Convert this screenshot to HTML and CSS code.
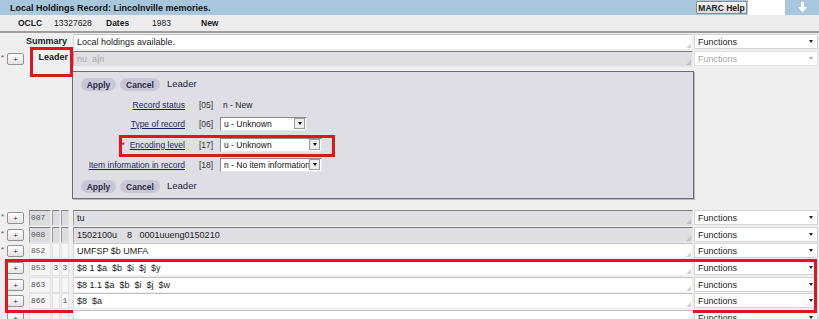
FILE: index.html
```html
<!DOCTYPE html>
<html lang="en">

<head>
    <meta charset="UTF-8">
    <meta name="viewport" content="width=device-width, initial-scale=1.0">
    <title>Local Holdings Record</title>
    <link rel="stylesheet" href="styles.css">
</head>

<body>
    <div class="titlebar">
        <span class="title">Local Holdings Record: Lincolnville memories.</span>
        <button class="help-btn" type="button">MARC Help</button>
        <span class="blank"></span>
        <span class="arrow-box">
            <svg width="9" height="11" viewBox="0 0 9 11"><path d="M3 0h3v5h3l-4.5 5.5L0 5h3z" fill="#fff"/></svg>
        </span>
    </div>

    <div class="infobar">
        <b class="w36">OCLC</b><span class="w52">13327628</span><b class="w46">Dates</b><span class="w49">1983</span><b>New</b>
    </div>

    <div class="record">
        <div class="row">
            <div class="summary-label">Summary</div>
            <div class="field">Local holdings available.</div>
            <div class="func">Functions<i class="caret"></i></div>
        </div>

        <div class="row short">
            <span class="star">*</span>
            <button class="plus" type="button">+</button>
            <div class="leader-label">Leader<span class="mark mark-leader"></span></div>
            <div class="field ro dim">nu  a|n</div>
            <div class="func disabled">Functions<i class="caret"></i></div>
        </div>

        <div class="leader-panel">
            <div class="actions">
                <button class="pill apply" type="button">Apply</button>
                <button class="pill cancel" type="button">Cancel</button>
                <span class="panel-title">Leader</span>
            </div>
            <div class="lf-list">
                <div class="lf-row r1">
                    <div class="lf-label"><a href="#">Record status</a></div>
                    <div class="lf-pos">[05]</div>
                    <div class="lf-value plain">n - New</div>
                </div>
                <div class="lf-row r2">
                    <div class="lf-label"><a href="#">Type of record</a></div>
                    <div class="lf-pos">[06]</div>
                    <div class="lf-value"><span class="dd w87"><span class="dd-text">u - Unknown</span><i class="dd-btn"></i></span></div>
                </div>
                <div class="lf-row r3">
                    <div class="lf-label"><span class="req">*</span><a href="#">Encoding level</a></div>
                    <div class="lf-pos">[17]</div>
                    <div class="lf-value"><span class="dd w102"><span class="dd-text">u - Unknown</span><i class="dd-btn"></i></span></div>
                    <span class="mark mark-encoding"></span>
                </div>
                <div class="lf-row r4">
                    <div class="lf-label"><a href="#">Item information in record</a></div>
                    <div class="lf-pos">[18]</div>
                    <div class="lf-value"><span class="dd w102"><span class="dd-text">n - No item information</span><i class="dd-btn"></i></span></div>
                </div>
            </div>
            <div class="actions bottom">
                <button class="pill apply" type="button">Apply</button>
                <button class="pill cancel" type="button">Cancel</button>
                <span class="panel-title">Leader</span>
            </div>
        </div>

        <div class="fields">
            <div class="row">
                <span class="star">*</span>
                <button class="plus" type="button">+</button>
                <div class="tag ro">007</div><div class="ind ro"></div><div class="ind ro"></div>
                <div class="field ro">tu</div>
                <div class="func">Functions<i class="caret"></i></div>
            </div>
            <div class="row short">
                <span class="star">*</span>
                <button class="plus" type="button">+</button>
                <div class="tag ro">008</div><div class="ind ro"></div><div class="ind ro"></div>
                <div class="field ro">1502100u    8   0001uueng0150210</div>
                <div class="func">Functions<i class="caret"></i></div>
            </div>
            <div class="row">
                <span class="star">*</span>
                <button class="plus" type="button">+</button>
                <div class="tag">852</div><div class="ind"></div><div class="ind"></div>
                <div class="field">UMFSP $b UMFA</div>
                <div class="func">Functions<i class="caret"></i></div>
            </div>

            <!-- 追加された所在フィールド -->
            <div class="group">
                <div class="row">
                    <span class="star"></span>
                    <button class="plus" type="button">+</button>
                    <div class="tag">853</div><div class="ind">3</div><div class="ind">3</div>
                    <div class="field">$8 1 $a  $b  $i  $j  $y</div>
                    <div class="func">Functions<i class="caret"></i></div>
                </div>
                <div class="row short">
                    <span class="star"></span>
                    <button class="plus" type="button">+</button>
                    <div class="tag">863</div><div class="ind"></div><div class="ind"></div>
                    <div class="field">$8 1.1 $a  $b  $i  $j  $w</div>
                    <div class="func">Functions<i class="caret"></i></div>
                </div>
                <div class="row">
                    <span class="star"></span>
                    <button class="plus" type="button">+</button>
                    <div class="tag">866</div><div class="ind"></div><div class="ind">1</div>
                    <div class="field">$8  $a</div>
                    <div class="func">Functions<i class="caret"></i></div>
                </div>
                <span class="mark mark-group"></span>
            </div>

            <div class="row">
                <span class="star"></span>
                <button class="plus" type="button">+</button>
                <div class="tag"></div><div class="ind"></div><div class="ind"></div>
                <div class="field"></div>
                <div class="func">Functions<i class="caret"></i></div>
            </div>
        </div>
    </div>
</body>

</html>
```

FILE: styles.css
```css
* {
    box-sizing: border-box;
}

body {
    margin: 0;
    width: 819px;
    height: 319px;
    overflow: hidden;
    background-color: #efefef;
    font-family: "Liberation Sans", Arial, sans-serif;
    font-size: 9px;
    color: #1a1a1a;
}

button {
    font-family: "Liberation Sans", Arial, sans-serif;
    padding: 0;
    cursor: pointer;
}

/* タイトルバー */
.titlebar {
    display: flex;
    align-items: center;
    height: 15px;
    background-color: #a8c7dc;
}

.titlebar .title {
    flex: 1;
    margin-left: 10px;
    font-weight: bold;
    color: #111;
}

.help-btn {
    width: 51px;
    height: 13px;
    font-size: 8.5px;
    font-weight: bold;
    color: #222;
    background: linear-gradient(#f6f6f6, #dadada);
    border: 1px solid #8c8c8c;
    border-radius: 1px;
}

.blank {
    width: 37px;
    height: 15px;
    margin-left: 1px;
    background-color: #fff;
}

.arrow-box {
    display: flex;
    align-items: center;
    justify-content: center;
    width: 34px;
    height: 15px;
}

.infobar {
    display: flex;
    align-items: center;
    height: 18px;
    padding-left: 18px;
    font-size: 8.5px;
    background-color: #ececec;
    border-bottom: 2px solid #9c9c9c;
}

.w36 { width: 36px; }
.w52 { width: 52px; }
.w46 { width: 46px; }
.w49 { width: 49px; }

.record {
    padding-top: 1px;
}

/* 行 */
.row {
    display: flex;
    align-items: flex-start;
    height: 17px;
}

.row.short {
    height: 16px;
}

.star {
    width: 6px;
    padding: 3px 0 0 1px;
    font-size: 8px;
    line-height: 8px;
    color: #555;
}

.plus {
    width: 17px;
    height: 12px;
    margin: 2px 0 0 1px;
    font-size: 8px;
    line-height: 9px;
    color: #333;
    background: linear-gradient(#ffffff, #e4e4e4);
    border: 1px solid #929292;
    border-radius: 2px;
}

.summary-label {
    width: 73px;
    padding-right: 6px;
    text-align: right;
    font-weight: bold;
    line-height: 14px;
}

.leader-label {
    position: relative;
    width: 44px;
    margin-left: 5px;
    padding-right: 5px;
    text-align: right;
    font-weight: bold;
    line-height: 12px;
}

.tag,
.ind {
    height: 16px;
    font-family: "Liberation Mono", "Courier New", monospace;
    font-size: 8px;
    line-height: 13px;
    color: #555;
    background-color: #f6f6f6;
    border: 1px solid #e2e2e2;
}

.tag {
    width: 22px;
    margin-left: 5px;
    padding-left: 1px;
}

.ind {
    width: 8px;
    margin-left: 1px;
    text-align: center;
}

.tag.ro,
.ind.ro {
    background-color: #dcdce0;
    border-color: #7e7e7e #e6e6e6 #e6e6e6 #a0a0a0;
}

.field {
    position: relative;
    width: 620px;
    height: 16px;
    margin-left: 4px;
    padding: 0 3px;
    line-height: 14px;
    white-space: pre;
    overflow: hidden;
    background-color: #fff;
    border: 1px solid #ececec;
    border-top-color: #c2c2c2;
    border-left-color: #d6d6d6;
}

.summary-label + .field,
.leader-label + .field {
    margin-left: 0;
}

.field.ro {
    background-color: #dfdfe3;
    border-color: #7e7e7e #e8e8e8 #e8e8e8 #a2a2a2;
}

.field.dim {
    color: #a8a8a8;
}

/* サイズ変更つまみ */
.field::after {
    content: "";
    position: absolute;
    right: 1px;
    bottom: 1px;
    width: 5px;
    height: 5px;
    background-image: radial-gradient(circle, #9a9a9a 0.6px, transparent 0.8px);
    background-size: 2px 2px;
    clip-path: polygon(100% 0, 100% 100%, 0 100%);
}

.func {
    display: flex;
    align-items: center;
    width: 124px;
    height: 15px;
    margin-left: 1px;
    padding-left: 3px;
    color: #222;
    background-color: #fff;
    border: 1px solid #d4d4d4;
}

.func.disabled {
    color: #a8a8a8;
    border-color: #e2e2e2;
}

.caret {
    margin-left: auto;
    margin-right: 4px;
    border-left: 2.5px solid transparent;
    border-right: 2.5px solid transparent;
    border-top: 3px solid #222;
}

.func.disabled .caret {
    border-top-color: #aaa;
}

/* 赤い強調枠 */
.mark {
    position: absolute;
    border: 3px solid #e2141c;
    pointer-events: none;
}

.mark-leader {
    left: 1px;
    top: -4px;
    width: 43px;
    height: 30px;
}

.mark-encoding {
    left: 46px;
    top: 2px;
    width: 216px;
    height: 22px;
}

.mark-group {
    left: 5px;
    right: 2px;
    top: -1px;
    bottom: -3px;
}

/* リーダー編集パネル */
.leader-panel {
    width: 622px;
    height: 128px;
    margin: 4px 0 0 72px;
    padding-top: 6px;
    background-color: #dfdee5;
    border: 1px solid #6c6c78;
    box-shadow: 1px 1px 0 #b8b8c0;
}

.actions {
    display: flex;
    align-items: center;
    height: 13px;
    margin-left: 8px;
}

.actions.bottom {
    margin-top: 7px;
}

.pill {
    height: 13px;
    margin-right: 4px;
    font-size: 8.5px;
    font-weight: bold;
    color: #2c2c3c;
    background-color: #c8c7d9;
    border: none;
    border-radius: 7px;
}

.pill.apply {
    width: 35px;
}

.pill.cancel {
    width: 40px;
}

.panel-title {
    margin-left: 3px;
    margin-top: -3px;
    font-size: 9.5px;
    color: #1c1c3c;
}

.lf-list {
    margin-top: 4px;
}

.lf-row {
    position: relative;
    display: flex;
    align-items: center;
    font-size: 8.5px;
}

.lf-row.r1 { height: 19px; }
.lf-row.r2 { height: 19px; }
.lf-row.r3 { height: 23px; }
.lf-row.r4 { height: 17px; }

.lf-label {
    width: 113px;
    padding-right: 1px;
    text-align: right;
}

.lf-label a {
    color: #1e1e64;
}

.req {
    margin-right: 5px;
    color: #333;
}

.lf-pos {
    width: 21px;
    margin-left: 13px;
    color: #333;
}

.lf-value.plain {
    padding-left: 3px;
    color: #222;
}

.dd {
    display: flex;
    align-items: center;
    height: 14px;
    padding-left: 3px;
    color: #111;
    background-color: #fff;
    border: 1px solid #e6e6e6;
    border-top-color: #8c8c8c;
    border-left-color: #8c8c8c;
}

.dd.w87 { width: 87px; }
.dd.w102 { width: 102px; }

.dd-text {
    flex: 1;
    min-width: 0;
    white-space: nowrap;
    overflow: hidden;
}

.dd-btn {
    display: flex;
    flex-shrink: 0;
    align-items: center;
    justify-content: center;
    width: 11px;
    height: 11px;
    margin-right: 1px;
    background-color: #ececec;
    border: 1px solid #9a9a9a;
}

.dd-btn::after {
    content: "";
    border-left: 2.5px solid transparent;
    border-right: 2.5px solid transparent;
    border-top: 3px solid #111;
}

.fields {
    margin-top: 11px;
}

.group {
    position: relative;
}
```
